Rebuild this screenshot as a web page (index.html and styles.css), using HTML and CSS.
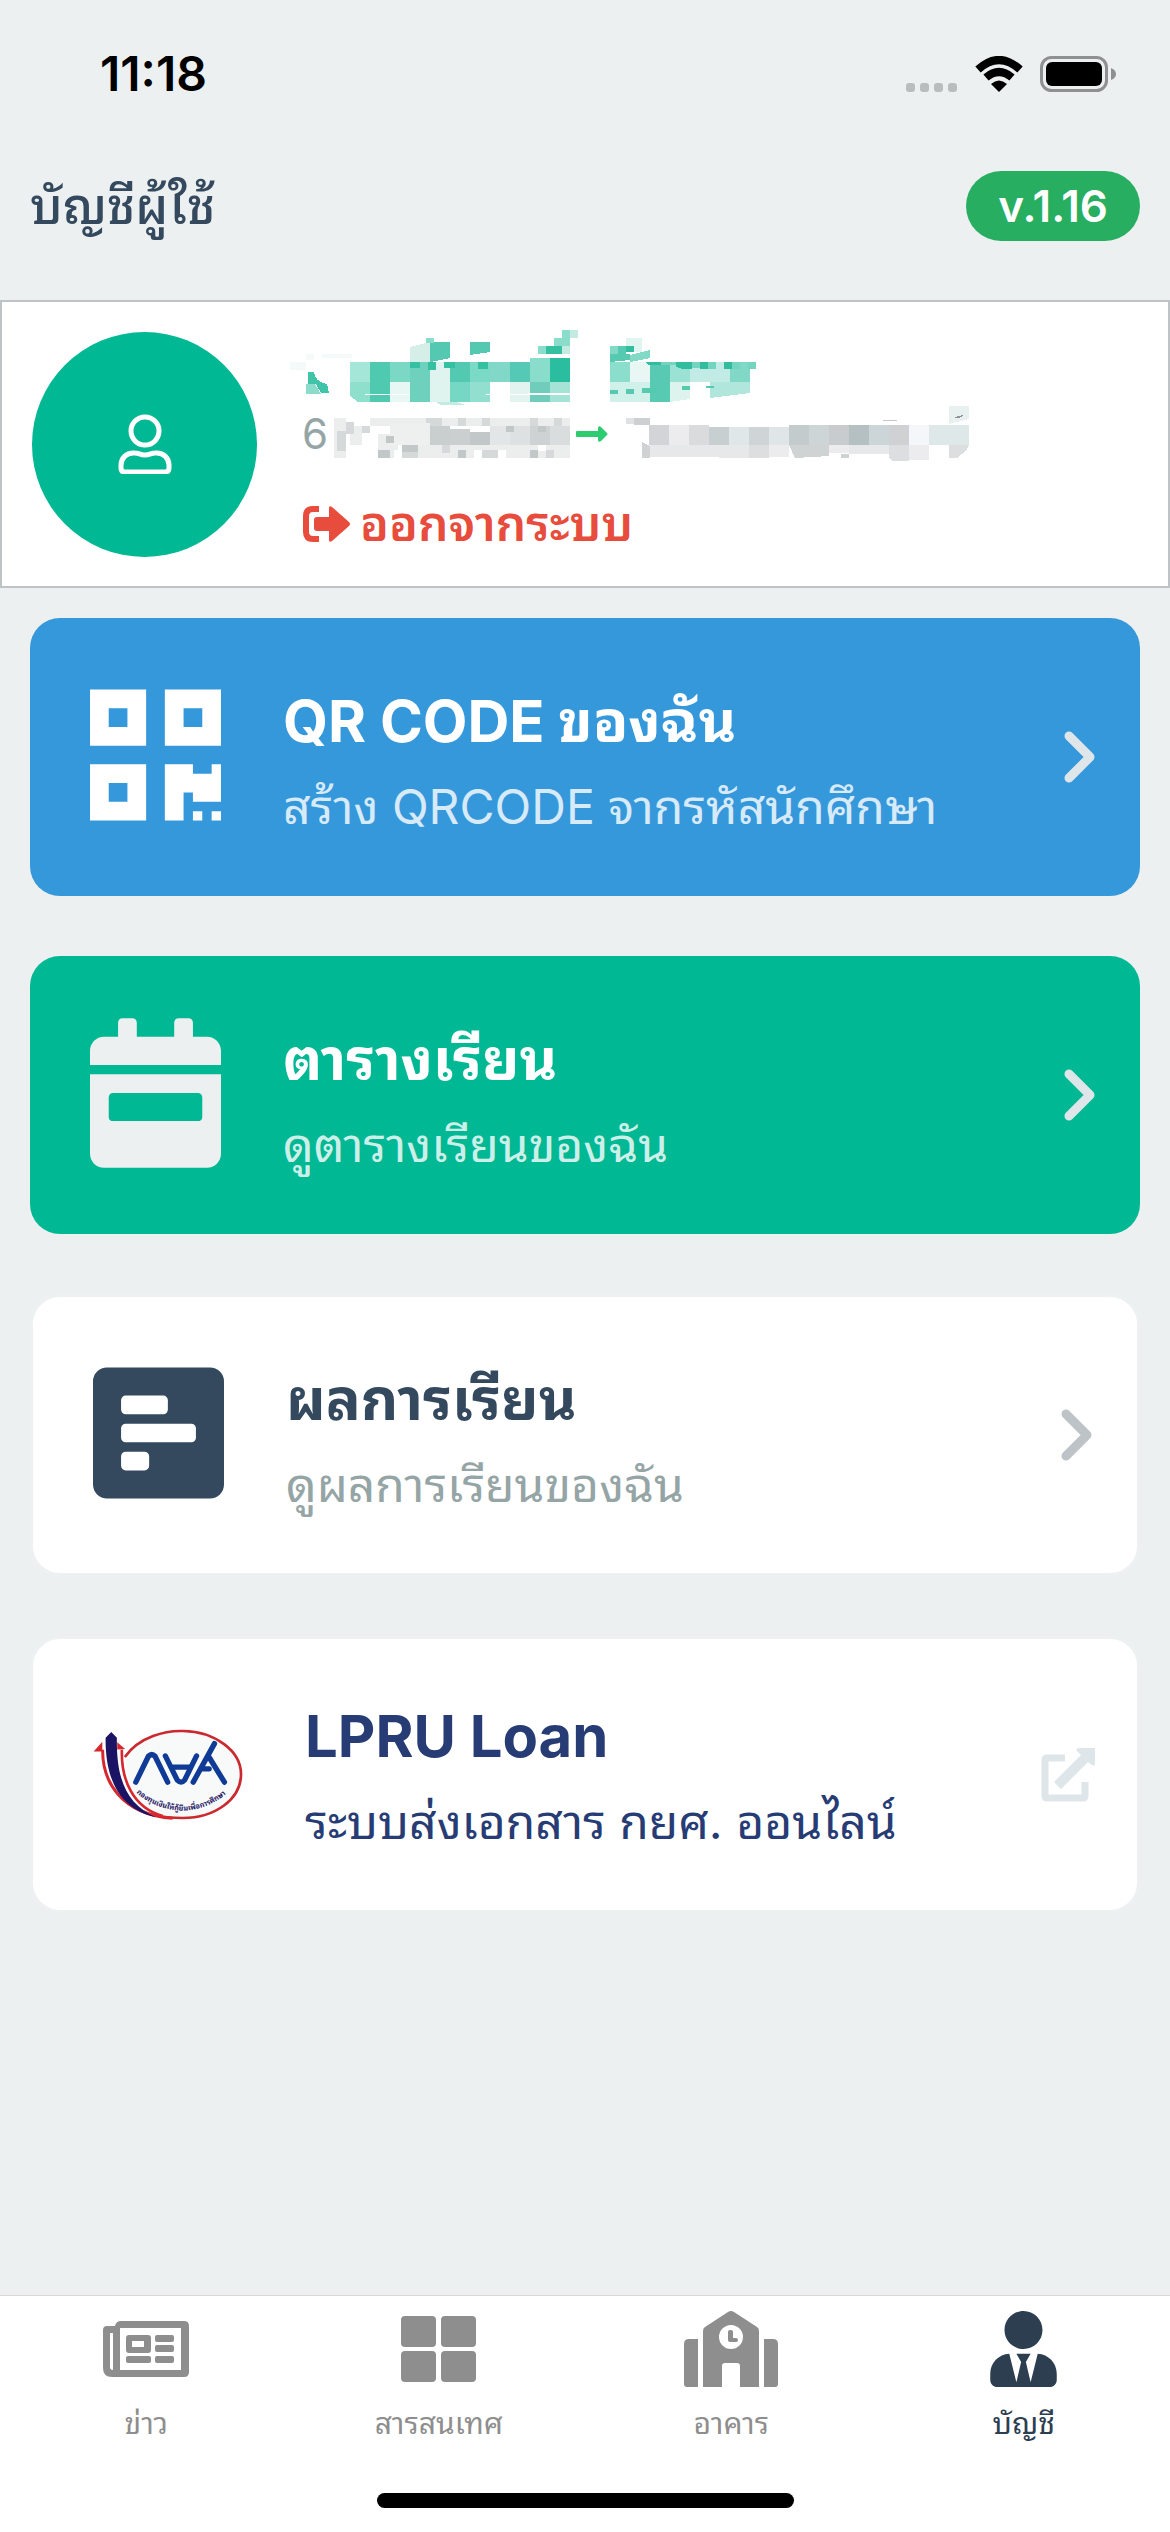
FILE: index.html
```
<!DOCTYPE html>
<html lang="th">
<head>
  <meta charset="utf-8">
  <meta name="viewport" content="width=device-width, initial-scale=1">
  <title>บัญชีผู้ใช้</title>
  <link rel="stylesheet" href="styles.css">
</head>
<body>
  <div class="statusbar">
    <span class="clock">11:18</span>
    <div class="status-icons">
      <svg width="52" height="36" viewBox="0 0 52 36" fill="#babdbe">
        <rect x="0" y="27" width="9" height="9" rx="3"/><rect x="14" y="27" width="9" height="9" rx="3"/>
        <rect x="28" y="27" width="9" height="9" rx="3"/><rect x="42" y="27" width="9" height="9" rx="3"/>
      </svg>
      <svg width="50" height="36" viewBox="0 0 50 36">
        <path d="M25 36l-8-8q8-7 16 0z"/>
        <path d="M4 13.500q21-19 42 0M12 21.500q13-11 26 0" fill="none" stroke="#000" stroke-width="8"/>
      </svg>
      <svg width="76" height="36" viewBox="0 0 76 36">
        <rect x="1.500" y="1.500" width="65" height="33" rx="10" fill="none" stroke="#8e9091" stroke-width="3"/>
        <rect x="6" y="6" width="56" height="24" rx="6"/>
        <path d="M71 12q5 2 5 6t-5 6z" fill="#8e9091"/>
      </svg>
    </div>
  </div>

  <header class="header">
    <h1>บัญชีผู้ใช้</h1>
    <span class="version">v.1.16</span>
  </header>

  <section class="profile">
    <div class="avatar">
      <svg width="54" height="60" viewBox="0 0 54 60" fill="none" stroke="#fff" stroke-width="5">
        <circle cx="27" cy="17" r="14"/>
        <path d="M17 39C8 38 3 45 3 51v3q0 4 4 4h40q4 0 4-4v-3c0-6-5-13-14-12-4 0-5 2-10 2s-6-2-10-2z"/>
      </svg>
    </div>
    <div class="profile-info">
      <!-- name, pixelated -->
      <svg class="mosaic" width="470" height="78" viewBox="290 328 470 78" shape-rendering="crispEdges">
        <g fill="#f3faf9"><path d="M290 362h16v8h-16zM306 354h8v6h-8zM322 354h30v4h-30z"/></g>
        <path fill="#3fc3a9" d="M308 372h6q1 10 13 12l2 9h-8l-5-9h-8z"/><path fill="#8ddccb" d="M306 384h9l6 10h-15z"/>
        <path fill="#a4e7d8" d="M350 362h20v20h-20z"/><path fill="#50c9b1" d="M370 362h20v40h-20z"/>
        <path fill="#7ad8c5" d="M390 362h20v20h-20z"/><path fill="#6ed1be" d="M410 362h20v40h-20z"/>
        <path fill="#dff3ef" d="M430 362h20v40h-20z"/><path fill="#54c9b2" d="M450 362h20v20h-20z"/>
        <path fill="#7adac6" d="M470 362h20v20h-20z"/><path fill="#82d8c8" d="M490 362h20v20h-20z"/>
        <path fill="#55c9b5" d="M510 362h20v20h-20z"/><path fill="#8adccb" d="M530 358h20v24h-20z"/>
        <path fill="#2abd9f" d="M550 358h20v24h-20z"/><path fill="#8fdfcd" d="M350 382h20v20h-12l-8-6z"/>
        <path fill="#e7f7f4" d="M390 382h20v20h-20z"/><path fill="#76d7c4" d="M450 382h20v20h-20z"/>
        <path fill="#93dfcf" d="M470 382h20v20h-20z"/><path fill="#e2f3f0" d="M510 382h20v20h-20z"/>
        <path fill="#70ccbb" d="M530 382h20v20h-20z"/><path fill="#a5e3d6" d="M550 382h20v20h-20z"/>
        <path fill="#d5eee8" d="M410 347l20-5v20h-20z"/><path fill="#55c8b1" d="M430 342h20v16l-20 4zM470 342h20v10l-20 3z"/>
        <path fill="#36c0a2" d="M410 362h10v6h-10zM428 362h8v8h-8zM444 362h11v6h-11zM478 362h10v7h-10zM546 346h16v8h-16z"/>
        <path fill="#8addca" d="M426 338h8v5h-8zM538 346h8v8h-8zM554 338h16v8h-16zM562 330h8v8h-8z"/>
        <path fill="#c4ebe2" d="M570 330h8v8h-8zM562 346h8v8h-8zM436 402h20l10 3h-25z"/>
        <path fill="#fff" d="M365 394h44v1h-44zM486 394l84-1v2h-84z"/>
        <path fill="#8bddcc" d="M610 362h20v20h-20z"/><path fill="#e8f7f4" d="M630 362h20v20h-20z"/>
        <path fill="#58c9b2" d="M650 362h20v40h-20z"/><path fill="#9be1d4" d="M670 362h20v20h-20z"/>
        <path fill="#c1ebe4" d="M690 362h40v20h-40z"/><path fill="#82d8c6" d="M730 362h20v20h-20z"/>
        <path fill="#d0f0ea" d="M610 382h40v20h-40z"/><path fill="#dcf3ee" d="M670 382h20v17l-20 3z"/>
        <path fill="#b0e6dc" d="M710 382h40v11l-40 5z"/><path fill="#82dac6" d="M610 346h8v8h-8zM630 355l20-5v8l-20 4z"/>
        <path fill="#55cab1" d="M618 346h8v8h-8zM610 354h20v6l-20 2zM610 390h8v4h-8zM626 389h8v5h-8zM642 388h16v5h-16zM682 386h8v4h-8zM706 386h8v2h-8z"/>
        <path fill="#31bd9e" d="M626 346h8v6h-8zM645 362h16v3h-12zM676 362h16v7h-10l-6-2zM700 362h8v7h-8zM724 362h8v7h-8z"/>
        <path fill="#73d4c0" d="M661 362h15v3h-15zM692 362h8v6h-8zM708 362h8v7h-8zM732 362h8v7h-8zM748 362h8v7h-8z"/>
        <path fill="#e0f5f0" d="M626 338h16v8h-16zM634 346h8v6h-8z"/>
      </svg>
      <div class="profile-id">
        <span>6</span>
        <svg class="mosaic" width="240" height="56" viewBox="332 403 240 56" shape-rendering="crispEdges">
          <path fill="#eceeee" d="M334 415h12v40h-12zM350 423h12v19h-12zM370 415h200v8H370zM378 431h20v24h-20zM410 442h160v13H410z"/>
          <path fill="#d5d9d9" d="M337 428h9v20h-9zM346 419h8v12h-8zM362 423h8v7h-8zM378 447h12v8h-12zM402 447h16v8h-16zM426 415h16v8h-16zM458 415h8v8h-8zM482 415h8v8h-8zM530 415h8v8h-8zM554 415h8v8h-8zM442 442h8v8h-8zM482 447h16v8h-16zM546 447h8v8h-8z"/>
          <path fill="#eef0f0" d="M390 420h40v22h-40z"/><path fill="#c9cece" d="M430 423h20v19h-20z"/>
          <path fill="#cbcfcf" d="M450 426h20v16h-20z"/><path fill="#c2c7c7" d="M470 429h20v13h-20z"/>
          <path fill="#e3e6e6" d="M490 423h20v19h-20z"/><path fill="#dde1e2" d="M510 423h20v19h-20z"/>
          <path fill="#ced2d2" d="M530 423h20v19h-20z"/><path fill="#dadddd" d="M550 423h20v19h-20z"/>
          <path fill="#c2c7c8" d="M378 447h12v8h-12zM386 433h8v7h-8zM402 442h16v7h-16zM458 447h8v8h-8zM530 447h8v8h-8zM506 423h8v6h-8zM538 423h8v6h-8z"/>
          <path fill="#fff" d="M370 423h8v24h-8zM394 447h8v8h-8zM474 447h8v8h-8zM498 447h8v8h-8zM538 442h8v6h-8z"/>
        </svg>
        <svg width="32" height="16" viewBox="0 0 32 16" fill="#2ecc71"><path d="M1 5h21V2q0-3 3-1l6 6q1 1 0 2l-6 6q-3 2-3-1v-3H1q-1 0-1-1V6q0-1 1-1z"/></svg>
        <svg class="mosaic" width="344" height="56" viewBox="627 403 344 56" shape-rendering="crispEdges">
          <path fill="#dfe1e3" d="M627 415h8v6h-8z"/><path fill="#cdd0d3" d="M635 415h16v7h-16z"/>
          <path fill="#d2d4d7" d="M650 422h20v20h-20z"/><path fill="#ececef" d="M670 422h20v20h-20z"/>
          <path fill="#d9dbdd" d="M690 422h20v20h-20z"/><path fill="#c7cfd0" d="M710 424h20v18h-20z"/>
          <path fill="#e0e7e8" d="M730 424h20v18h-20z"/><path fill="#cfd5d6" d="M750 424h20v18h-20z"/>
          <path fill="#e0e5e7" d="M770 424h20v18h-20z"/><path fill="#c4cbcc" d="M790 422h20v20h-20z"/>
          <path fill="#cdd5d7" d="M810 422h20v20h-20z"/><path fill="#c8ccce" d="M830 422h20v20h-20z"/>
          <path fill="#b5c0c3" d="M850 422h20v20h-20z"/><path fill="#ccd5d7" d="M870 422h20v20h-20z"/>
          <path fill="#cfd1d3" d="M890 422h20v20h-20z"/><path fill="#f5f6fa" d="M910 422h20v20h-20z"/>
          <path fill="#dfe8e9" d="M930 422h40v20h-40z"/><path fill="#e8f0f0" d="M950 403h20v13l-20 5z"/>
          <path fill="#cfd3d4" d="M643 439l8 4v12h-8zM790 442h40v11l-34 2zM842 451h8v4h-8z"/>
          <path fill="#e7e8ea" d="M651 442h40v12h-40zM690 442h60v13l-60-1zM850 442h40v9h-40z"/>
          <path fill="#dcdedf" d="M750 442h20v13h-20zM890 442h20v16h-17l-3-4zM950 442h20l-3 6-9 7h-8z"/>
          <path fill="#ececee" d="M770 442h20v12h-20zM830 442h20v8h-20zM910 442h20v15h-20z"/>
          <path fill="#8f9597" d="M956 414l8-2v1l-4 2h-4z"/><path fill="#c4c7c9" d="M884 417h14v1h-14z"/>
        </svg>
      </div>
      <button type="button" class="logout">
        <svg width="48" height="36" viewBox="0 0 48 36">
          <path d="M17 3h-6q-7 0-7 7v16q0 7 7 7h6" fill="none" stroke="#e74c3c" stroke-width="6"/>
          <path d="M27 2v9H15q-3 0-3 3v8q0 3 3 3h12v9q0 3 3 1l17-15q2-2 0-4L30 1q-3-2-3 1z" fill="#e74c3c"/>
        </svg>
        ออกจากระบบ
      </button>
    </div>
  </section>

  <main class="menu">
    <a class="card card-blue" href="#qrcode">
      <svg class="card-icon" viewBox="0 0 448 512" fill="#fff"><path d="M0 224h192V32H0v192zM64 96h64v64H64V96zm192-64v192h192V32H256zm128 128h-64V96h64v64zM0 480h192V288H0v192zm64-128h64v64H64v-64zm352-64h32v128h-96v-32h-32v96h-64V288h96v32h64v-32zm0 160h32v32h-32v-32zm-64 0h32v32h-32v-32z"/></svg>
      <div class="card-text">
        <h2>QR CODE ของฉัน</h2>
        <p>สร้าง QRCODE จากรหัสนักศึกษา</p>
      </div>
      <svg class="chevron" viewBox="0 0 32 52"><path d="M5 5l21 21L5 47"/></svg>
    </a>

    <a class="card card-green" href="#schedule">
      <svg class="card-icon" viewBox="0 0 448 512" fill="#ecf0f1">
        <path d="M0 160v-48c0-26.500 21.500-48 48-48h48V16q0-16 16-16h32q16 0 16 16v48h128V16q0-16 16-16h32q16 0 16 16v48h48c26.500 0 48 21.500 48 48v48z"/>
        <path fill-rule="evenodd" d="M0 192h448v272c0 26.500-21.500 48-48 48H48c-26.500 0-48-21.500-48-48zm80 64q-16 0-16 16v64q0 16 16 16h288q16 0 16-16v-64q0-16-16-16z"/>
      </svg>
      <div class="card-text">
        <h2>ตารางเรียน</h2>
        <p>ดูตารางเรียนของฉัน</p>
      </div>
      <svg class="chevron" viewBox="0 0 32 52"><path d="M5 5l21 21L5 47"/></svg>
    </a>

    <a class="card card-white" href="#grades">
      <svg class="card-icon" viewBox="0 0 448 512">
        <rect y="32" width="448" height="448" rx="48" fill="#34495e"/>
        <g fill="#fff"><rect x="96" y="128" width="160" height="64" rx="16"/><rect x="96" y="224" width="256" height="64" rx="16"/><rect x="96" y="320" width="96" height="64" rx="16"/></g>
      </svg>
      <div class="card-text">
        <h2>ผลการเรียน</h2>
        <p>ดูผลการเรียนของฉัน</p>
      </div>
      <svg class="chevron" viewBox="0 0 32 52"><path d="M5 5l21 21L5 47"/></svg>
    </a>

    <a class="card card-white card-loan" href="#loan">
      <svg class="loan-logo" viewBox="100 88 452 274">
        <path d="M196 172C240 110 320 92 372 94c96 2 174 60 174 130 0 76-78 132-176 132-60 0-110-8-150-36" fill="#f8f9f9" stroke="#c9292f" stroke-width="8"/>
        <path d="M124 152c2 110 70 200 204 204-110-14-178-90-182-204z" fill="#fff"/>
        <path d="M129 150C128 250 188 345 340 357" fill="none" stroke="#d6282e" stroke-width="9"/>
        <path d="M187 150C184 240 220 325 310 350" fill="none" stroke="#d6282e" stroke-width="8"/>
        <path d="M102 156l26-30v30zM173 128l24 20-24 2z" fill="#d6282e"/>
        <path d="M138 114l17-17 17 17c-2 120 26 200 118 240-104-22-154-108-152-240z" fill="#1b1464"/>
        <g stroke="#0f3a96" stroke-width="16" stroke-linecap="round" stroke-linejoin="round" fill="none">
          <path d="M229 248l38-78q10-10 20 0l38 78M318 169l36 73q12 12 22 0l36-73M339 203h50"/>
          <path d="M402 248l64-116M448 170l48 78M424 208h26"/>
        </g>
        <path id="loanArc" d="M230 280Q290 332 370 334Q452 332 516 270" fill="none"/>
        <text class="loan-caption"><textPath href="#loanArc">กองทุนเงินให้กู้ยืมเพื่อการศึกษา</textPath></text>
      </svg>
      <div class="card-text">
        <h2>LPRU Loan</h2>
        <p>ระบบส่งเอกสาร กยศ. ออนไลน์</p>
      </div>
      <svg class="external" viewBox="0 0 54 54">
        <path d="M24 10H6q-2 0-2 2v36q0 2 2 2h36q2 0 2-2V34" fill="none" stroke="#dfe6e9" stroke-width="7"/>
        <path d="M39 0h15v15q0 4-3 2l-4-3-27 27-7-7 27-27-4-4q-2-3 3-3z" fill="#dfe6e9"/>
      </svg>
    </a>
  </main>

  <footer class="bottom">
    <nav class="tabs">
      <a class="tab" href="#news">
        <svg width="86" height="76" viewBox="0 0 86 76" fill="#8e8e8e">
          <path fill-rule="evenodd" d="M10 15h2q1-5 6-5h63q5 0 5 5v46q0 5-5 5H9q-9 0-9-9V19q0-4 4-4zm7 2v42h61V17zM7 22v34q0 3 3 3V22z"/>
          <path fill-rule="evenodd" d="M26 24h19q3 0 3 3v12q0 3-3 3H26q-3 0-3-3V27q0-3 3-3zm3 6v6h12v-6z"/>
          <rect x="52" y="24" width="19" height="7" rx="2"/><rect x="52" y="34" width="19" height="7" rx="2"/>
          <rect x="23" y="45" width="25" height="7" rx="2"/><rect x="52" y="45" width="19" height="7" rx="2"/>
        </svg>
        ข่าว
      </a>
      <a class="tab" href="#info">
        <svg width="76" height="76" viewBox="0 0 76 76" fill="#8e8e8e">
          <rect x="0" y="5" width="35" height="31" rx="4"/><rect x="40" y="5" width="35" height="31" rx="4"/>
          <rect x="0" y="40" width="35" height="31" rx="4"/><rect x="40" y="40" width="35" height="31" rx="4"/>
        </svg>
        สารสนเทศ
      </a>
      <a class="tab" href="#building">
        <svg width="94" height="76" viewBox="0 0 94 76" fill="#8e8e8e">
          <path d="M5 28h9v48H3q-3 0-3-3V33q0-5 5-5zM80 28h9q5 0 5 5v40q0 3-3 3H80z"/>
          <path fill-rule="evenodd" d="M21 16l23-15q3-2 6 0l23 15q2 1 2 4v56H56V55q0-3-3-3H41q-3 0-3 3v21H19V20q0-3 2-4zm26-2a12 12 0 1 0 0 24a12 12 0 1 0 0-24zm-1 5h1q2 0 2 2v6h3q2 0 2 2t-2 2h-6q-2 0-2-2v-8q0-2 2-2z"/>
        </svg>
        อาคาร
      </a>
      <a class="tab active" href="#account">
        <svg width="67" height="76" viewBox="0 0 448 512" fill="#2c3e50"><path d="M224 256c70.700 0 128-57.300 128-128S294.700 0 224 0 96 57.300 96 128s57.300 128 128 128zm95.800 32.600L272 480l-32-136 32-56h-96l32 56-32 136-47.800-191.400C56.900 292 0 350.300 0 422.400V464c0 26.500 21.500 48 48 48h352c26.500 0 48-21.500 48-48v-41.600c0-72.100-56.900-130.400-128.200-133.800z"/></svg>
        บัญชี
      </a>
    </nav>
    <div class="home-indicator"></div>
  </footer>
</body>
</html>
```
FILE: styles.css
```
* {
  box-sizing: border-box;
}
body {
  margin: 0;
  min-height: 100vh;
  display: flex;
  flex-direction: column;
  background-color: #ecf0f1;
  font-family: Inter, "Noto Sans Thai Looped", "Noto Looped Thai", Loma, "Noto Sans Thai", "Noto Sans", sans-serif;
}
h1, h2, p {
  margin: 0;
}
svg {
  display: block;
  flex-shrink: 0;
}
a {
  color: inherit;
  text-decoration: none;
}
.statusbar {
  height: 148px;
  padding: 0 54px 0 100px;
  display: flex;
  justify-content: space-between;
  align-items: center;
}
.clock {
  font-size: 48px;
  line-height: 56px;
  font-weight: 600;
}
.status-icons {
  display: flex;
  gap: 16px;
}
.header {
  height: 116px;
  margin-bottom: 36px;
  padding: 0 30px;
  display: flex;
  justify-content: space-between;
  align-items: center;
}
.header h1 {
  font-size: 50px;
  line-height: 60px;
  font-weight: 500;
  color: #34495e;
}
.version {
  padding: 8px 32px;
  border-radius: 35px;
  background-color: #27ae60;
  color: #fff;
  font-size: 44px;
  line-height: 54px;
  font-weight: 600;
}
.profile {
  display: flex;
  align-items: center;
  gap: 33px;
  height: 288px;
  padding: 0 30px;
  background-color: #fff;
  border: 2px solid #bdc3c7;
}
.avatar {
  width: 225px;
  height: 225px;
  display: flex;
  align-items: center;
  justify-content: center;
  flex-shrink: 0;
  border-radius: 50%;
  background-color: #00b894;
}
.profile-info {
  display: flex;
  flex-direction: column;
  align-items: flex-start;
  padding-bottom: 6px;
}
.profile-id {
  display: flex;
  align-items: center;
  gap: 4px;
  padding-left: 12px;
  font-size: 42px;
  line-height: 54px;
  color: #95a5a6;
}
.profile-id .mosaic:last-child {
  margin-left: 14px;
}
.logout {
  display: flex;
  align-items: center;
  gap: 10px;
  margin-top: 32px;
  padding: 0 0 0 12px;
  border: none;
  background: none;
  font-family: inherit;
  font-size: 48px;
  line-height: 60px;
  font-weight: 600;
  color: #e74c3c;
}
.menu {
  flex: 1;
  padding: 30px;
}
.card {
  display: flex;
  align-items: center;
  min-height: 278px;
  margin-bottom: 60px;
  padding: 0 42px 0 60px;
  border-radius: 30px;
}
.card-icon {
  width: 131px;
  height: 150px;
  margin-bottom: 4px;
}
.card-text {
  flex: 1;
  padding: 8px 0 0 62px;
}
.card h2 {
  font-size: 58px;
  line-height: 92px;
  font-weight: 700;
}
.card p {
  font-size: 48px;
  line-height: 80px;
}
.card-blue {
  background-color: #3498db;
  color: #fff;
}
.card-green {
  background-color: #00b894;
  color: #fff;
}
.card-blue p,
.card-green p {
  opacity: 0.8;
}
.card-white {
  min-height: 282px;
  background-color: #fff;
  border: 3px solid #edf1f2;
  color: #34495e;
}
.card-white p {
  color: #95a5a6;
}
.card-loan {
  min-height: 277px;
}
.card-loan .card-text {
  padding-top: 2px;
}
.card-loan,
.card-loan p {
  color: #273c75;
}
.chevron {
  width: 32px;
  height: 52px;
  margin-right: 2px;
  fill: none;
  stroke: #dfe6e9;
  stroke-width: 9;
  stroke-linecap: round;
  stroke-linejoin: round;
}
.card-white .chevron {
  stroke: #bdc3c7;
}
.loan-logo {
  width: 150px;
  height: 91px;
}
.loan-caption {
  font-size: 22px;
  font-weight: 700;
  fill: #1b1464;
}
.external {
  width: 54px;
  height: 54px;
}
.bottom {
  background-color: #fff;
  border-top: 1px solid #d8d8d8;
}
.tabs {
  display: grid;
  grid-template-columns: repeat(4, 1fr);
  padding-top: 15px;
}
.tab {
  display: flex;
  flex-direction: column;
  align-items: center;
  gap: 12px;
  font-size: 30px;
  line-height: 48px;
  color: #8e8e8e;
}
.tab.active {
  color: #2c3e50;
}
.home-indicator {
  width: 417px;
  height: 15px;
  margin: 46px auto 24px;
  border-radius: 8px;
  background-color: #000;
}
```
